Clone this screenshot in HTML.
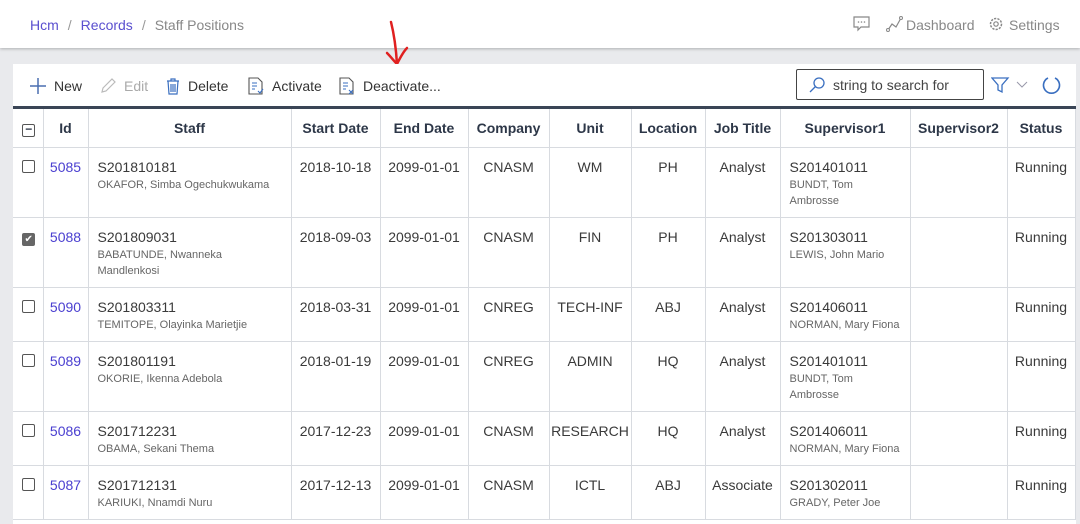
<!DOCTYPE html>
<html><head><meta charset="utf-8"><style>
*{box-sizing:border-box;margin:0;padding:0}
body{width:1080px;height:515px;overflow:hidden;background:#e9eaed;font-family:"Liberation Sans",sans-serif;color:#333;position:relative}
.hdr{position:absolute;left:0;top:0;width:1080px;height:48px;background:#fff;box-shadow:0 1px 3px rgba(0,0,0,.25)}
.bc{position:absolute;left:30px;top:17px;font-size:14px;color:#888}
.bc a{color:#5a4fcf;text-decoration:none}
.bc span{margin:0 9px;color:#999}
.rt{position:absolute;top:17px;font-size:14px;color:#888}
.card{position:absolute;left:13px;top:64px;width:1063px;height:460px;background:#fff}
.tb{position:absolute;top:13px;font-size:14px;color:#333;display:flex;align-items:center}
.tb svg{margin-right:7px}
.search{position:absolute;left:783px;top:5px;width:188px;height:31px;border:1px solid #444;border-radius:2px;font-size:14px;color:#444;padding:7px 0 0 36px}
table{position:absolute;left:0;top:42px;border-collapse:collapse;table-layout:fixed;border-top:3px solid #3a4556;font-size:14px}
th{height:40px;font-weight:bold;color:#2d3748;text-align:center;border:1px solid #d8dbe0;border-top:none}
td{border:1px solid #d8dbe0;vertical-align:top;padding-top:11px;color:#3a3a3a;line-height:17px}
td.c{text-align:center}
td.l{padding-left:9px}
.sub{font-size:11px;color:#666;line-height:16px;margin-top:1px}
.id{color:#4a3fd0;text-align:center}
.cb{display:inline-block;width:13px;height:13px;border:1px solid #555;border-radius:2px;margin-left:2px;margin-top:1px}
.cbk{background:#666;border-color:#666;color:#fff;font-size:10px;line-height:12px;text-align:center}
tr:first-child th:first-child,td:first-child{border-left:none;text-align:center;padding-left:0}
</style></head><body>
<div class="hdr">
<div class="bc"><a>Hcm</a><span>/</span><a>Records</a><span>/</span>Staff Positions</div>
<svg style="position:absolute;left:853px;top:16px" width="17" height="16" viewBox="0 0 17 16"><path d="M1 1h15v10H8l-3 3v-3H1z" fill="none" stroke="#888" stroke-width="1.2"/><circle cx="5.5" cy="6" r=".8" fill="#888"/><circle cx="8.5" cy="6" r=".8" fill="#888"/><circle cx="11.5" cy="6" r=".8" fill="#888"/></svg>
<svg style="position:absolute;left:886px;top:16px" width="17" height="16" viewBox="0 0 17 16"><path d="M2 14l4-6 4 3 5-9" fill="none" stroke="#888" stroke-width="1.2"/><circle cx="2" cy="14" r="1.5" fill="#fff" stroke="#888"/><circle cx="15" cy="2" r="1.5" fill="#fff" stroke="#888"/></svg>
<div class="rt" style="left:906px">Dashboard</div>
<svg style="position:absolute;left:988px;top:16px" width="16" height="16" viewBox="0 0 16 16"><circle cx="8" cy="8" r="5.5" fill="none" stroke="#888" stroke-width="1.5" stroke-dasharray="2.2 1.2"/><circle cx="8" cy="8" r="2.2" fill="none" stroke="#888" stroke-width="1.2"/></svg>
<div class="rt" style="left:1009px">Settings</div>
</div>
<svg style="position:absolute;left:385px;top:20px" width="30" height="48" viewBox="0 0 30 48"><path d="M6 2C9 14 11 28 12 44M2 33c4 4 7 8 10 11 3-6 6-12 10-16" fill="none" stroke="#e02020" stroke-width="2.5" stroke-linecap="round"/></svg>
<div class="card">
<div class="tb" style="left:16px"><svg width="18" height="18"><path d="M9 1v16M1 9h16" stroke="#4a6fb0" stroke-width="1.5"/></svg>New</div>
<div class="tb" style="left:86px;color:#aaa"><svg width="18" height="18"><path d="M3 15l1-4 9-9 3 3-9 9z" fill="none" stroke="#bbb" stroke-width="1.2"/></svg>Edit</div>
<div class="tb" style="left:152px"><svg width="16" height="18"><path d="M2 4h12M6 4V2h4v2M3 4l1 13h8l1-13M6 7v8M8 7v8M10 7v8" fill="none" stroke="#3a6fc0" stroke-width="1.2"/></svg>Delete</div>
<div class="tb" style="left:234px"><svg width="18" height="18"><path d="M2 1h9l4 4v12H2z" fill="none" stroke="#555" stroke-width="1.1"/><path d="M5 6h5M5 9h5M5 12h3M11 14l2 2 3-4" fill="none" stroke="#3a6fc0" stroke-width="1.1"/></svg>Activate</div>
<div class="tb" style="left:325px"><svg width="18" height="18"><path d="M2 1h9l4 4v12H2z" fill="none" stroke="#555" stroke-width="1.1"/><path d="M5 6h5M5 9h5M5 12h3M11 13l4 4M15 13l-4 4" fill="none" stroke="#3a6fc0" stroke-width="1.1"/></svg>Deactivate...</div>
<div class="search">string to search for</div>
<svg style="position:absolute;left:795px;top:12px" width="18" height="18"><circle cx="11" cy="7" r="5" fill="none" stroke="#3a6fc0" stroke-width="1.3"/><path d="M7.5 10.5L2 16" stroke="#3a6fc0" stroke-width="1.3"/></svg>
<svg style="position:absolute;left:978px;top:12px" width="40" height="18"><path d="M1 2h16l-6 7v7l-4-2V9z" fill="none" stroke="#3a6fc0" stroke-width="1.3"/><path d="M26 6l5 5 5-5" fill="none" stroke="#99a" stroke-width="1"/></svg>
<svg style="position:absolute;left:1029px;top:11px" width="20" height="20"><path d="M13 3A8 8 0 1 1 6 3" fill="none" stroke="#3a6fc0" stroke-width="1.6"/></svg>
<table>
<colgroup><col style="width:30px"><col style="width:45px"><col style="width:203px"><col style="width:89px"><col style="width:88px"><col style="width:81px"><col style="width:82px"><col style="width:74px"><col style="width:75px"><col style="width:130px"><col style="width:97px"><col style="width:68px"></colgroup>
<tr><th><span class="cb" style="text-align:center;line-height:9px;font-size:12px">−</span></th><th>Id</th><th>Staff</th><th>Start Date</th><th>End Date</th><th>Company</th><th>Unit</th><th>Location</th><th>Job Title</th><th>Supervisor1</th><th>Supervisor2</th><th>Status</th></tr>
<tr style="height:70px"><td><span class="cb"></span></td><td class="id">5085</td><td class="l">S201810181<div class="sub">OKAFOR, Simba Ogechukwukama</div></td><td class="c">2018-10-18</td><td class="c">2099-01-01</td><td class="c">CNASM</td><td class="c">WM</td><td class="c">PH</td><td class="c">Analyst</td><td class="l">S201401011<div class="sub">BUNDT, Tom<br>Ambrosse</div></td><td></td><td class="c">Running</td></tr>
<tr style="height:70px"><td><span class="cb cbk">✔</span></td><td class="id">5088</td><td class="l">S201809031<div class="sub">BABATUNDE, Nwanneka<br>Mandlenkosi</div></td><td class="c">2018-09-03</td><td class="c">2099-01-01</td><td class="c">CNASM</td><td class="c">FIN</td><td class="c">PH</td><td class="c">Analyst</td><td class="l">S201303011<div class="sub">LEWIS, John Mario</div></td><td></td><td class="c">Running</td></tr>
<tr style="height:54px"><td><span class="cb"></span></td><td class="id">5090</td><td class="l">S201803311<div class="sub">TEMITOPE, Olayinka Marietjie</div></td><td class="c">2018-03-31</td><td class="c">2099-01-01</td><td class="c">CNREG</td><td class="c">TECH-INF</td><td class="c">ABJ</td><td class="c">Analyst</td><td class="l">S201406011<div class="sub">NORMAN, Mary Fiona</div></td><td></td><td class="c">Running</td></tr>
<tr style="height:70px"><td><span class="cb"></span></td><td class="id">5089</td><td class="l">S201801191<div class="sub">OKORIE, Ikenna Adebola</div></td><td class="c">2018-01-19</td><td class="c">2099-01-01</td><td class="c">CNREG</td><td class="c">ADMIN</td><td class="c">HQ</td><td class="c">Analyst</td><td class="l">S201401011<div class="sub">BUNDT, Tom<br>Ambrosse</div></td><td></td><td class="c">Running</td></tr>
<tr style="height:54px"><td><span class="cb"></span></td><td class="id">5086</td><td class="l">S201712231<div class="sub">OBAMA, Sekani Thema</div></td><td class="c">2017-12-23</td><td class="c">2099-01-01</td><td class="c">CNASM</td><td class="c">RESEARCH</td><td class="c">HQ</td><td class="c">Analyst</td><td class="l">S201406011<div class="sub">NORMAN, Mary Fiona</div></td><td></td><td class="c">Running</td></tr>
<tr style="height:54px"><td><span class="cb"></span></td><td class="id">5087</td><td class="l">S201712131<div class="sub">KARIUKI, Nnamdi Nuru</div></td><td class="c">2017-12-13</td><td class="c">2099-01-01</td><td class="c">CNASM</td><td class="c">ICTL</td><td class="c">ABJ</td><td class="c">Associate</td><td class="l">S201302011<div class="sub">GRADY, Peter Joe</div></td><td></td><td class="c">Running</td></tr>
</table>
</div>
</body></html>
